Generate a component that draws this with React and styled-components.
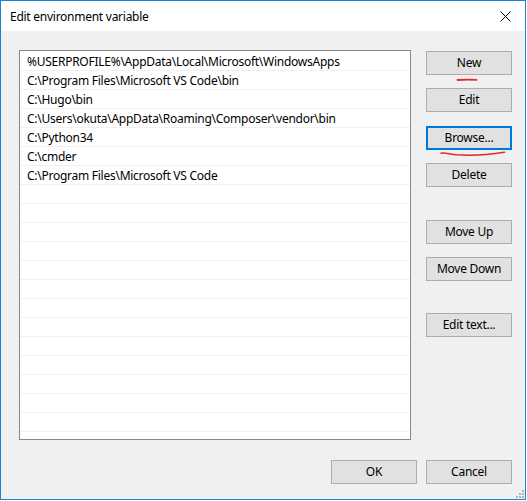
import React from 'react';
import styled, { createGlobalStyle } from 'styled-components';

/* CSS---------------------------------------------------------------------*/
const GlobalStyle = createGlobalStyle`
  html, body {
    margin: 0;
    padding: 0;
    background: #ffffff;
  }
  * {
    box-sizing: border-box;
  }
`;

// Outer window frame with the blue accent border
const Window = styled.div`
  position: relative;
  width: 526px;
  height: 500px;
  border: 1px solid #1883d7;
  background: #f0f0f0;
  display: flex;
  flex-direction: column;
  font-family: "Noto Sans", "Open Sans", sans-serif;
  font-size: 12px;
  letter-spacing: -0.26px;
  color: #000000;
`;

const TitleBar = styled.div`
  height: 30px;
  background: #ffffff;
  display: flex;
  align-items: center;
  justify-content: space-between;
  padding: 0 10px 0 9px;
`;

const Title = styled.span`
  font-size: 12px;
  color: #000000;
`;

const CloseButton = styled.div`
  width: 12px;
  height: 12px;
  display: flex;
  align-items: center;
  justify-content: center;
  margin-right: 4px;
`;

const Body = styled.div`
  flex: 1;
  display: flex;
  flex-direction: column;
  padding: 19px 13px 15px 18px;
`;

const Main = styled.div`
  display: flex;
  gap: 15px;
`;

const ListBox = styled.div`
  width: 392px;
  height: 390px;
  border: 1px solid #828790;
  background: #ffffff;
  padding-top: 1px;
  overflow: hidden;
`;

const Row = styled.div`
  height: 19px;
  border-bottom: 1px solid #f0f0f0;
  padding: 1px 0 0 7px;
  display: flex;
  align-items: center;
  white-space: nowrap;
  line-height: 17px;
`;

const SideButtons = styled.div`
  width: 86px;
  display: flex;
  flex-direction: column;
`;

const Button = styled.div`
  width: 86px;
  height: 24px;
  margin-top: ${props => props.$gap || 0}px;
  background: #e1e1e1;
  border: ${props => (props.$focused ? '2px solid #0078d7' : '1px solid #adadad')};
  display: flex;
  align-items: center;
  justify-content: center;
  line-height: 1;
  padding-bottom: 1px;
`;

const Footer = styled.div`
  display: flex;
  justify-content: flex-end;
  gap: 9px;
  margin-top: 20px;
`;

// Red pen marks drawn over the dialog
const Scribble = styled.svg`
  position: absolute;
  pointer-events: none;
`;

const Grip = styled.svg`
  position: absolute;
  right: 1px;
  bottom: 1px;
`;
/*-------------------------------------------------------------------------*/

/* Arrays------------------------------------------------------------------*/
const paths = [
  '%USERPROFILE%\\AppData\\Local\\Microsoft\\WindowsApps',
  'C:\\Program Files\\Microsoft VS Code\\bin',
  'C:\\Hugo\\bin',
  'C:\\Users\\okuta\\AppData\\Roaming\\Composer\\vendor\\bin',
  'C:\\Python34',
  'C:\\cmder',
  'C:\\Program Files\\Microsoft VS Code',
];

const rows = [...paths, ...Array(13).fill('')];

const sideButtons = [
  { label: 'New', gap: 1 },
  { label: 'Edit', gap: 13 },
  { label: 'Browse...', gap: 14, focused: true },
  { label: 'Delete', gap: 13 },
  { label: 'Move Up', gap: 33 },
  { label: 'Move Down', gap: 13 },
  { label: 'Edit text...', gap: 32 },
];
/*-------------------------------------------------------------------------*/

/* Render------------------------------------------------------------------*/
const App = () => (
  <Window>
    <GlobalStyle />
    <TitleBar>
      <Title>Edit environment variable</Title>
      <CloseButton>
        <svg width="11" height="11" viewBox="0 0 11 11">
          <path d="M0.5 0.5 L10.5 10.5 M10.5 0.5 L0.5 10.5" stroke="#000" strokeWidth="1" />
        </svg>
      </CloseButton>
    </TitleBar>

    <Body>
      <Main>
        <ListBox>
          {rows.map((text, i) => (
            <Row key={i}>{text}</Row>
          ))}
        </ListBox>
        <SideButtons>
          {sideButtons.map(b => (
            <Button key={b.label} $gap={b.gap} $focused={b.focused}>{b.label}</Button>
          ))}
        </SideButtons>
      </Main>
      <Footer>
        <Button>OK</Button>
        <Button>Cancel</Button>
      </Footer>
    </Body>

    <Scribble style={{ left: 455, top: 76 }} width="22" height="6" viewBox="0 0 22 6">
      <path d="M1.5 3 C6 2.6 14 2.4 20.5 2.8" stroke="#e8262b" strokeWidth="1.8" fill="none" strokeLinecap="round" />
    </Scribble>
    <Scribble style={{ left: 438, top: 148 }} width="68" height="9" viewBox="0 0 68 9">
      <path d="M2 4.2 C6 3.5 10 5 18 5.8 C30 6.6 48 6 65.5 3.2" stroke="#e8262b" strokeWidth="1.6" fill="none" strokeLinecap="round" />
    </Scribble>

    <Grip width="10" height="10" viewBox="0 0 10 10">
      <rect x="8" y="2" width="2" height="2" fill="#b4b4b4" />
      <rect x="5" y="5" width="2" height="2" fill="#b4b4b4" />
      <rect x="8" y="5" width="2" height="2" fill="#b4b4b4" />
      <rect x="2" y="8" width="2" height="2" fill="#b4b4b4" />
      <rect x="5" y="8" width="2" height="2" fill="#b4b4b4" />
      <rect x="8" y="8" width="2" height="2" fill="#b4b4b4" />
    </Grip>
  </Window>
);
/*-------------------------------------------------------------------------*/

export default App;
